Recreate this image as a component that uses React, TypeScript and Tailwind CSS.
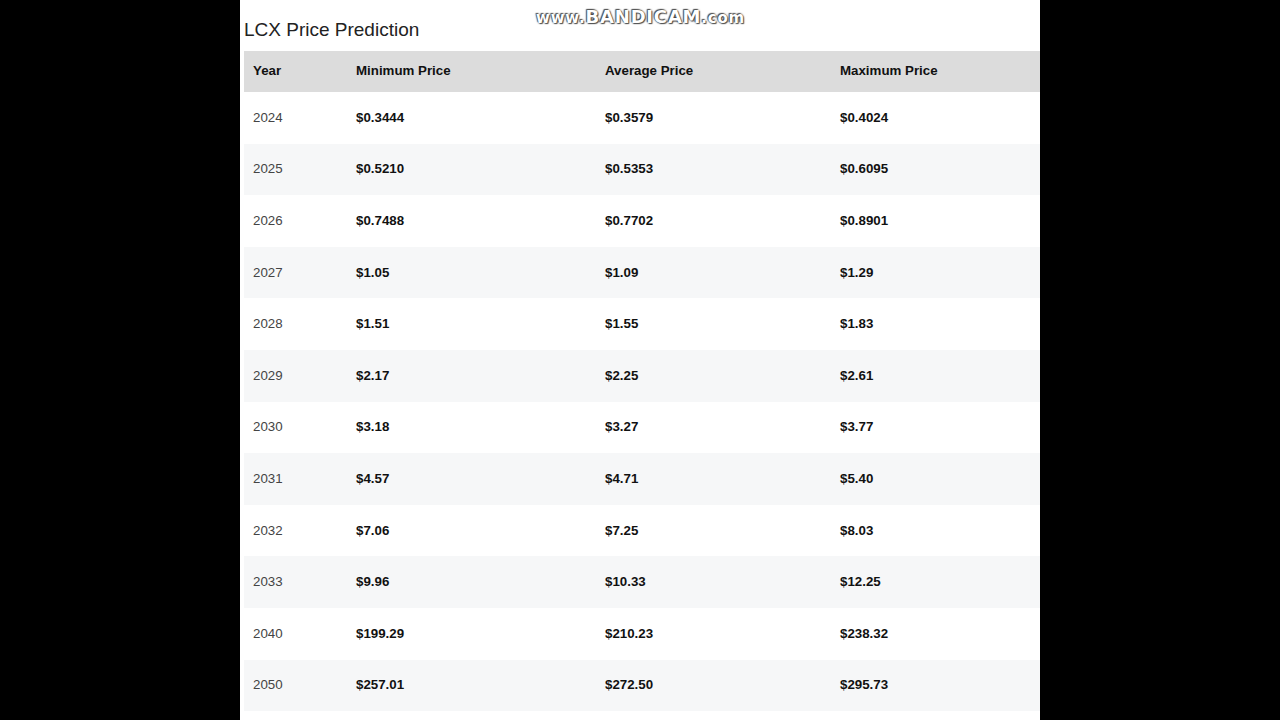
const rows = [
  ["2024", "$0.3444", "$0.3579", "$0.4024"],
  ["2025", "$0.5210", "$0.5353", "$0.6095"],
  ["2026", "$0.7488", "$0.7702", "$0.8901"],
  ["2027", "$1.05", "$1.09", "$1.29"],
  ["2028", "$1.51", "$1.55", "$1.83"],
  ["2029", "$2.17", "$2.25", "$2.61"],
  ["2030", "$3.18", "$3.27", "$3.77"],
  ["2031", "$4.57", "$4.71", "$5.40"],
  ["2032", "$7.06", "$7.25", "$8.03"],
  ["2033", "$9.96", "$10.33", "$12.25"],
  ["2040", "$199.29", "$210.23", "$238.32"],
  ["2050", "$257.01", "$272.50", "$295.73"],
];

export default function App() {
  return (
    <div className="w-[1280px] h-[720px] bg-black flex justify-center overflow-hidden relative" style={{ fontFamily: '"Liberation Sans", Arial, sans-serif' }}>
      <div className="w-[800px] h-full bg-white pl-[4px] flex flex-col">
        <div className="h-[51px] flex items-end pb-[7px] text-[19px] text-[#222]">LCX Price Prediction</div>
        <div className="grid grid-cols-[103px_249px_235px_209px] h-[41px] pb-[2px] items-center bg-[#dcdcdc] text-[13.3px] font-bold text-[#111]">
          <div className="pl-[9px]">Year</div>
          <div className="pl-[9px]">Minimum Price</div>
          <div className="pl-[9px]">Average Price</div>
          <div className="pl-[9px]">Maximum Price</div>
        </div>
        {rows.map((r, i) => (
          <div key={r[0]} className={`grid grid-cols-[103px_249px_235px_209px] h-[51.6px] shrink-0 items-center text-[13.3px] ${i % 2 === 1 ? "bg-[#f6f7f8]" : "bg-white"}`}>
            <div className="pl-[9px] text-[#444]">{r[0]}</div>
            <div className="pl-[9px] font-bold text-[#111]">{r[1]}</div>
            <div className="pl-[9px] font-bold text-[#111]">{r[2]}</div>
            <div className="pl-[9px] font-bold text-[#111]">{r[3]}</div>
          </div>
        ))}
      </div>
      <div className="absolute left-[536px] top-[3px] text-[18px] font-bold text-white tracking-[0.8px] [text-shadow:0_0_2px_#333,1px_1px_1px_#555,-1px_-1px_1px_#555]" style={{ fontFamily: '"DejaVu Sans", sans-serif' }}>
        <span className="text-[15px]">www.</span>BANDICAM<span className="text-[15px]">.com</span>
      </div>
    </div>
  );
}
